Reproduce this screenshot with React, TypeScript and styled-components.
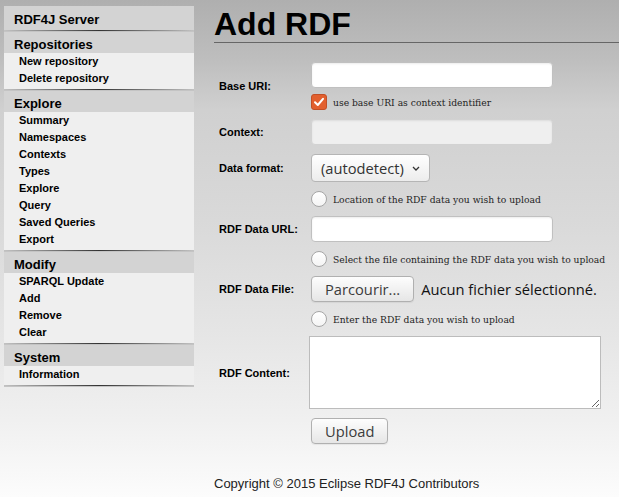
import React from "react";
import styled, { createGlobalStyle } from "styled-components";

const GlobalStyle = createGlobalStyle`
  html, body { margin: 0; padding: 0; }
  body { font-family: "Liberation Sans", Arial, sans-serif; }
`;

const Page = styled.div`
  min-height: 100vh;
  box-sizing: border-box;
  padding: 6px 0 0 4px;
  display: flex;
  align-items: flex-start;
  background: linear-gradient(
    to bottom,
    #afafaf 0px,
    #bebebe 60px,
    #d0d0d0 110px,
    #d9d9d9 220px,
    #e5e5e5 330px,
    #f0f0f0 420px,
    #fcfcfc 497px
  );
`;

const Sidebar = styled.nav`
  width: 190px;
  flex: none;
`;

const SideTitle = styled.div`
  height: 24px;
  box-sizing: border-box;
  padding: 4px 10px 0;
  background: #d3d3d3;
  font: bold 13px/19px "Liberation Sans", Arial, sans-serif;
  color: #000;
`;

const Separator = styled.div`
  height: 2px;
  background: linear-gradient(to right, #c2c2c2, #333 50%, #c2c2c2) top / 100% 1px no-repeat,
    #c4c4c4;
`;

const SectionHeader = styled.div`
  height: 21px;
  box-sizing: border-box;
  padding: 4px 10px 0;
  background: #d3d3d3;
  font: bold 13px/17px "Liberation Sans", Arial, sans-serif;
  color: #000;
`;

const ItemList = styled.ul`
  list-style: none;
  margin: 0;
  padding: 0 0 2px;
  background: #efefef;
`;

const ItemLink = styled.a`
  display: block;
  padding-left: 15px;
  font: bold 11px/17px "Liberation Sans", Arial, sans-serif;
  color: #000;
  text-decoration: none;
`;

const Main = styled.main`
  flex: 1;
  margin-left: 20px;
  min-width: 0;
`;

const Title = styled.h1`
  margin: 1px 0 0;
  font: bold 32px/35px "Liberation Sans", Arial, sans-serif;
  color: #000;
  border-bottom: 1px solid #666;
`;

const Form = styled.form`
  margin: 19px 0 0 5px;
  display: grid;
  grid-template-columns: 92px 1fr;
  row-gap: 9px;
  align-items: center;
`;

const Label = styled.label`
  font: bold 11px "Liberation Sans", Arial, sans-serif;
  color: #000;
`;

const Field = styled.div`
  display: flex;
  flex-direction: column;
  align-items: flex-start;
`;

const TextInput = styled.input<{ $muted?: boolean }>`
  width: 242px;
  height: 26px;
  box-sizing: border-box;
  margin: 0;
  padding: 2px 6px;
  border: 1px solid ${(p) => (p.$muted ? "#d2d2d2" : "#c0c0c0")};
  border-radius: 4px;
  background: ${(p) => (p.$muted ? "#efefef" : "#fff")};
  box-shadow: inset 0 1px 2px rgba(0, 0, 0, 0.08);
  outline: none;
`;

const OptionRow = styled.div<{ $top?: number }>`
  display: flex;
  align-items: center;
  gap: 6px;
  margin-top: ${(p) => p.$top ?? 0}px;
  font: 9.2px "DejaVu Serif", serif;
  color: #1e1e1e;
`;

const CheckBox = styled.span`
  width: 16px;
  height: 16px;
  box-sizing: border-box;
  border-radius: 3px;
  background: #e2602f;
  border: 1px solid #c24f27;
  display: flex;
  align-items: center;
  justify-content: center;
`;

const Radio = styled.span`
  width: 16px;
  height: 16px;
  box-sizing: border-box;
  border-radius: 50%;
  border: 1px solid #a6a6a6;
  background: linear-gradient(#ffffff, #f4f4f4);
`;

const SelectBox = styled.button`
  width: 119px;
  height: 28px;
  box-sizing: border-box;
  padding: 0 9px;
  display: inline-flex;
  align-items: center;
  justify-content: space-between;
  border: 1px solid #b5b5b5;
  border-radius: 4px;
  background: linear-gradient(#ffffff, #ececec);
  font: 14.7px "Open Sans", "Noto Sans", sans-serif;
  color: #333;
`;

const Button = styled.button`
  height: 26px;
  box-sizing: border-box;
  padding: 0 13px;
  border: 1px solid #b0b0b0;
  border-radius: 4px;
  background: linear-gradient(#fdfdfd, #e6e6e6);
  box-shadow: 0 1px 1px rgba(0, 0, 0, 0.06);
  font: 14.7px "Open Sans", "Noto Sans", sans-serif;
  color: #3c3c3c;
`;

const FileRow = styled.div`
  display: flex;
  align-items: center;
  gap: 7px;
`;

const FileStatus = styled.span`
  font: 14.7px "Open Sans", "Noto Sans", sans-serif;
  color: #111;
`;

const Content = styled.textarea`
  width: 292px;
  height: 73px;
  box-sizing: border-box;
  margin: 0 0 0 -2px;
  border: 1px solid #bcbcbc;
  background: #fff;
  resize: both;
  outline: none;
`;

const Footer = styled.footer`
  margin-top: 32px;
  font: 13px/15px "Liberation Sans", Arial, sans-serif;
  color: #222;
`;

const sections = [
  { title: "Repositories", items: ["New repository", "Delete repository"] },
  {
    title: "Explore",
    items: ["Summary", "Namespaces", "Contexts", "Types", "Explore", "Query", "Saved Queries", "Export"],
  },
  { title: "Modify", items: ["SPARQL Update", "Add", "Remove", "Clear"] },
  { title: "System", items: ["Information"] },
];

const Check = () => (
  <svg width="12" height="12" viewBox="0 0 12 12">
    <path d="M2 6.2 L4.8 9 L10 2.8" fill="none" stroke="#fff" strokeWidth="2" strokeLinecap="round" strokeLinejoin="round" />
  </svg>
);

const Chevron = () => (
  <svg width="8" height="5" viewBox="0 0 8 5">
    <path d="M1 1 L4 4 L7 1" fill="none" stroke="#333" strokeWidth="1.3" />
  </svg>
);

export default function App() {
  return (
    <>
      <GlobalStyle />
      <Page>
        <Sidebar>
          <SideTitle>RDF4J Server</SideTitle>
          <Separator />
          {sections.map((s) => (
            <div key={s.title}>
              <SectionHeader>{s.title}</SectionHeader>
              <ItemList>
                {s.items.map((it) => (
                  <li key={it}>
                    <ItemLink href="#">{it}</ItemLink>
                  </li>
                ))}
              </ItemList>
              <Separator />
            </div>
          ))}
        </Sidebar>
        <Main>
          <Title>Add RDF</Title>
          <Form onSubmit={(e) => e.preventDefault()}>
            <Label>Base URI:</Label>
            <Field>
              <TextInput type="text" />
              <OptionRow $top={6}>
                <CheckBox>
                  <Check />
                </CheckBox>
                use base URI as context identifier
              </OptionRow>
            </Field>

            <Label>Context:</Label>
            <Field>
              <TextInput type="text" $muted />
            </Field>

            <Label>Data format:</Label>
            <Field>
              <SelectBox type="button">
                (autodetect)
                <Chevron />
              </SelectBox>
            </Field>

            <span />
            <OptionRow>
              <Radio />
              Location of the RDF data you wish to upload
            </OptionRow>

            <Label>RDF Data URL:</Label>
            <Field>
              <TextInput type="text" />
            </Field>

            <span />
            <OptionRow>
              <Radio />
              Select the file containing the RDF data you wish to upload
            </OptionRow>

            <Label>RDF Data File:</Label>
            <FileRow>
              <Button type="button">Parcourir...</Button>
              <FileStatus>Aucun fichier sélectionné.</FileStatus>
            </FileRow>

            <span />
            <OptionRow>
              <Radio />
              Enter the RDF data you wish to upload
            </OptionRow>

            <Label>RDF Content:</Label>
            <Field>
              <Content />
            </Field>

            <span />
            <Field>
              <Button type="submit">Upload</Button>
            </Field>
          </Form>
          <Footer>Copyright © 2015 Eclipse RDF4J Contributors</Footer>
        </Main>
      </Page>
    </>
  );
}
